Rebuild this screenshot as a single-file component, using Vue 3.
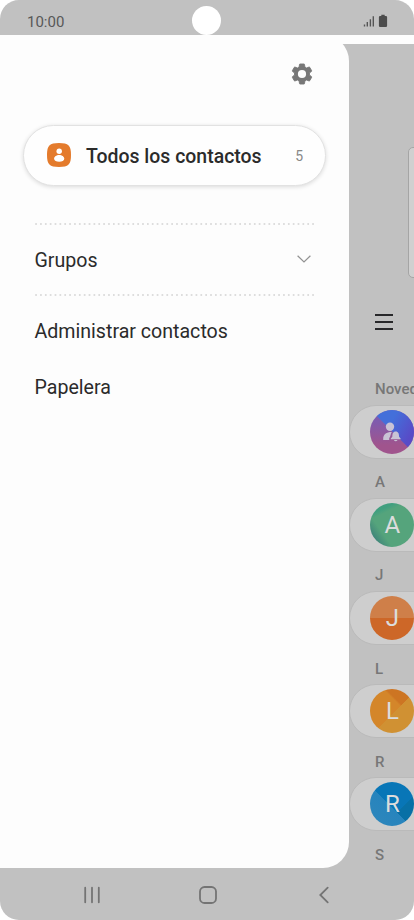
<script setup>
const contacts = [
  { heading: 'Novedades', kind: 'news' },
  { heading: 'A', letter: 'A', kind: 'green' },
  { heading: 'J', letter: 'J', kind: 'orange' },
  { heading: 'L', letter: 'L', kind: 'amber' },
  { heading: 'R', letter: 'R', kind: 'blue' },
]
const links = ['Administrar contactos', 'Papelera']
</script>

<template>
  <div class="phone">
    <header class="status">
      <span class="time">10:00</span>
      <span class="camera"></span>
      <svg class="signals" width="26" height="14" viewBox="0 0 26 14">
        <path d="M1.500 10.500v2M4.300 8v4.500M7.400 5.200v7.300M10.300 2.200v10.300" stroke="#555" stroke-width="1.400" fill="none" />
        <path d="M18.300.8h3.400v1.100h1.200q1.200 0 1.200 1.200v8.700q0 1.200-1.200 1.200h-5.800q-1.200 0-1.200-1.200V3.100q0-1.200 1.200-1.200h1.200z" fill="#4c4c4c" />
      </svg>
    </header>

    <main class="body">
      <aside class="drawer">
        <div class="tools">
          <svg width="24" height="24" viewBox="0 0 24 24">
            <path fill="#777" stroke="#777" stroke-width=".9" stroke-linejoin="round" d="M19.500 12c0-.34-.03-.67-.07-1l2.110-1.650c.19-.15.24-.42.12-.64l-2-3.460c-.12-.22-.39-.3-.61-.22l-2.490 1c-.52-.4-1.080-.73-1.690-.98l-.38-2.650A.49.49 0 0 0 14 2h-4c-.25 0-.46.18-.49.42l-.38 2.650c-.61.25-1.170.59-1.690.98l-2.490-1c-.23-.09-.49 0-.61.22l-2 3.460c-.13.22-.07.49.12.64L4.570 11c-.04.330-.07.66-.07 1s.03.67.07 1l-2.110 1.650c-.19.15-.24.42-.12.64l2 3.460c.12.22.39.3.61.22l2.490-1c.52.4 1.080.73 1.690.98l.38 2.650c.03.24.24.42.49.42h4c.25 0 .46-.18.49-.42l.38-2.650c.61-.25 1.170-.59 1.690-.98l2.490 1c.23.09.49 0 .61-.22l2-3.460c.12-.22.07-.49-.12-.64L19.430 13c.04-.33.07-.66.07-1z" />
            <circle cx="12" cy="12" r="4.100" fill="#fdfdfd" />
          </svg>
        </div>

        <div class="all">
          <svg width="24" height="24" viewBox="0 0 24 24">
            <path d="M12 0C21.500 0 24 2.500 24 12S21.500 24 12 24 0 21.500 0 12 2.500 0 12 0z" fill="#e47b2c" />
            <circle cx="12.200" cy="8.200" r="2.700" fill="#fff" />
            <path d="M7.100 15.800c0-2.300 2.300-3.900 5.100-3.900s5.100 1.600 5.100 3.900c0 1.800-2.300 2.900-5.100 2.900s-5.100-1.100-5.100-2.900z" fill="#fff" />
          </svg>
          <span class="all-label">Todos los contactos</span>
          <span class="count">5</span>
        </div>

        <svg class="dots" width="280" height="2" viewBox="0 0 280 2">
          <path d="M.2 1H280" stroke="#d2d2d2" stroke-width="1.600" stroke-dasharray="1.700 3.160" />
        </svg>
        <div class="groups">
          <span>Grupos</span>
          <svg width="14" height="8" viewBox="0 0 14 8">
            <path d="M.6.7 7 7 13.400.7" fill="none" stroke="#929292" stroke-width="1.200" />
          </svg>
        </div>
        <svg class="dots" width="280" height="2" viewBox="0 0 280 2">
          <path d="M.2 1H280" stroke="#d2d2d2" stroke-width="1.600" stroke-dasharray="1.700 3.160" />
        </svg>

        <nav class="links">
          <span v-for="link in links" :key="link">{{ link }}</span>
        </nav>
      </aside>

      <section class="behind">
        <div class="tip"></div>
        <svg class="menu" width="18" height="18" viewBox="0 0 18 18">
          <path d="M0 2h18M0 9h18M0 16h18" stroke="#28282a" stroke-width="1.800" />
        </svg>
        <div v-for="c in contacts" :key="c.heading" class="entry">
          <span class="heading">{{ c.heading }}</span>
          <div class="card">
            <div class="avatar" :class="c.kind">
              <template v-if="c.letter">{{ c.letter }}</template>
              <svg v-else width="20" height="20" viewBox="0 0 20 20">
                <g fill="#c9c3d5">
                  <circle cx="8" cy="4.700" r="4.200" />
                  <path d="M1.200 18v-1.200c0-4.400 3-6.800 8.600-6.800-1.500 1.800-.8 4-2.600 6.300V18z" />
                  <path d="M8.800 17.300v-.9l1.500-1.600c0-3 .7-5.300 3.400-5.300s3.400 2.300 3.400 5.300l1.500 1.600v.9zM11.800 18h3.800q-1.900 2.600-3.800 0z" />
                </g>
              </svg>
            </div>
          </div>
        </div>
        <span class="heading last">S</span>
      </section>
    </main>

    <footer class="nav">
      <svg width="16" height="18" viewBox="0 0 16 18">
        <path d="M1.200 1.700v14.600M8 1.700v14.600M14.800 1.700v14.600" stroke="#747474" stroke-width="1.800" stroke-linecap="round" />
      </svg>
      <svg width="18" height="18" viewBox="0 0 18 18">
        <rect x="1" y="1" width="16" height="16" rx="4.600" fill="none" stroke="#747474" stroke-width="1.800" />
      </svg>
      <svg width="10" height="18" viewBox="0 0 10 18">
        <path d="M8.700 1.700 1.300 9l7.400 7.300" fill="none" stroke="#747474" stroke-width="1.800" stroke-linecap="round" />
      </svg>
    </footer>
  </div>
</template>

<style>
body {
  background: #fff;
}
</style>

<style scoped>
.phone {
  box-sizing: border-box;
  width: 414px;
  height: 920px;
  display: grid;
  grid-template-rows: 35px 833px 52px;
  overflow: hidden;
  border-radius: 19px;
  background: #c1c1c1;
  color: #2b2b2b;
  font-family: Roboto, sans-serif;
}
svg {
  display: block;
  flex: none;
}
.status {
  position: relative;
  display: flex;
  justify-content: space-between;
  padding: 13px 25px 0 27px;
}
.time {
  font-size: 15px;
  line-height: 18px;
  color: #585858;
}
.camera {
  position: absolute;
  left: 192px;
  top: 6px;
  width: 29px;
  height: 29px;
  border-radius: 50%;
  background: #fff;
}
.signals {
  margin-top: 1px;
}
.body {
  display: grid;
  grid-template-columns: 349px 65px;
  background: linear-gradient(#fdfdfd 9px, transparent 9px);
  overflow: hidden;
}
.drawer {
  border-radius: 0 26px 26px 0;
  background: #fdfdfd;
}
.tools {
  box-sizing: border-box;
  display: flex;
  justify-content: flex-end;
  height: 65px;
  padding: 27.400px 35.500px 0 0;
}
.all {
  box-sizing: border-box;
  display: flex;
  align-items: center;
  width: 303px;
  height: 61px;
  margin: 25px 0 0 23px;
  padding: 0 22px 0 23px;
  border: 1px solid #e2e2e2;
  border-radius: 31px;
  background: #fefefe;
  box-shadow: 0 1px 4px rgba(0, 0, 0, .14);
}
.all > svg {
  margin-top: -1px;
}
.all-label {
  margin-left: 15px;
  padding-top: 2px;
  font-size: 19.450px;
  font-weight: 500;
}
.count {
  margin-left: auto;
  font-size: 14px;
  color: #888;
}
.dots {
  margin-left: 35px;
}
.all + .dots {
  margin-top: 37px;
}
.groups {
  display: flex;
  align-items: center;
  justify-content: space-between;
  height: 69px;
  padding: 0 38px 0 34.500px;
  font-size: 19.600px;
}
.groups span {
  padding-top: 2px;
}
.groups svg {
  margin-top: -1px;
}
.links {
  display: grid;
  grid-auto-rows: 56px;
  align-items: center;
  padding: 7px 0 0 34.500px;
  font-size: 19.600px;
}
.behind {
  overflow: hidden;
  color: #777;
}
.tip {
  box-sizing: border-box;
  width: 80px;
  height: 131px;
  margin: 111.500px 0 0 59px;
  border: 1px solid #a5a5a5;
  border-radius: 5px;
  background: #d0d0d0;
}
.menu {
  margin: 35.500px 0 0 26px;
}
.entry {
  height: 93.200px;
}
.menu + .entry {
  margin-top: 49px;
}
.heading {
  display: block;
  height: 24.600px;
  padding-left: 26px;
  font-size: 15px;
  font-weight: 500;
  line-height: 19px;
  white-space: nowrap;
}
.card {
  box-sizing: border-box;
  display: flex;
  align-items: center;
  width: 300px;
  height: 54px;
  padding-left: 20.400px;
  border: 1px solid #bababa;
  border-radius: 27px;
  background: #cecece;
}
.avatar {
  display: grid;
  place-items: center;
  width: 44px;
  height: 44px;
  border-radius: 50%;
  color: #dcdcdc;
  font-size: 24px;
  line-height: 45px;
}
.news {
  background: linear-gradient(45deg, #a0548d, #825ba8 50%, transparent 50%), linear-gradient(135deg, #436fda 30%, #584bc7);
}
.green {
  background: linear-gradient(55deg, #40867a 14%, transparent 30%), linear-gradient(155deg, #419f7f 18%, #55a47c 26%);
}
.orange {
  background: linear-gradient(#cf7f49 50%, #cd6728 50%);
}
.amber {
  background: linear-gradient(135deg, transparent 54%, #d09133 54.500%), linear-gradient(45deg, #d4862a 65%, #cd7523 68%);
}
.blue {
  background: linear-gradient(45deg, #2f87bb, #2784bd 46%, transparent 46.500%), linear-gradient(135deg, #0876b7 65%, #0870a6 66%);
}
.news {
  background: linear-gradient(225deg, transparent 50%, rgba(160, 84, 141, .35) 50%), linear-gradient(160deg, #436fda 25%, #5b4fc5 60%, #8a55a5 85%);
  background: linear-gradient(to top, #a0548d 20%, #7f5cae 75%);
  position: relative;
  overflow: hidden;
}
.news::before {
  content: "";
  position: absolute;
  inset: 0;
  background: linear-gradient(120deg, #436fda 40%, #584bc7 80%);
  clip-path: polygon(0 0, 100% 0, 100% 100%);
}
.news svg {
  position: relative;
}
</style>
<style scoped>
.nav {
  display: grid;
  grid-template-columns: 116px 116px 116px;
  justify-items: center;
  align-items: center;
  padding: 2px 32px 0 34px;
}
</style>
